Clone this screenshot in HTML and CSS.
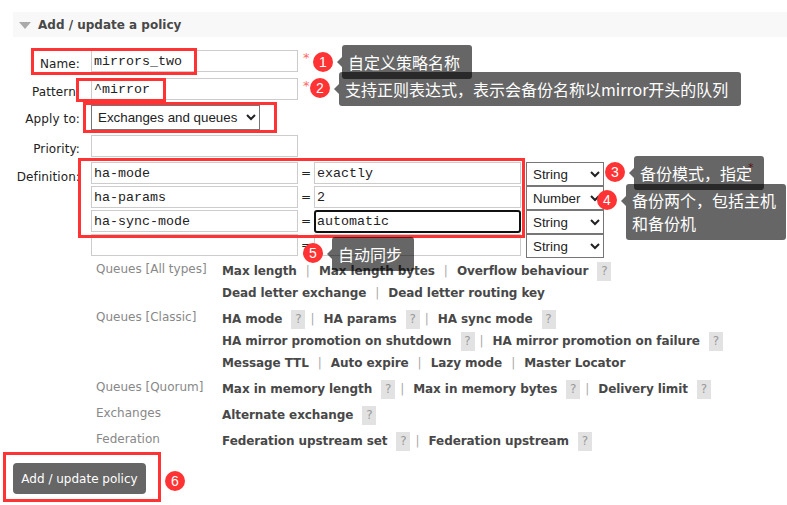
FILE: index.html
```html
<!DOCTYPE html>
<html lang="en">
<head>
    <meta charset="UTF-8">
    <meta name="viewport" content="width=device-width, initial-scale=1.0">
    <title>Add / update a policy</title>
    <link rel="stylesheet" href="styles.css">
</head>
<body>
<div class="page">
    <h2 class="panel-title"><span class="triangle"></span>Add / update a policy</h2>

    <form class="policy-form">
        <div class="form-row row-name">
            <label>Name:</label>
            <input class="text-input" type="text" value="mirrors_two">
            <span class="required">*</span>
        </div>
        <div class="form-row row-pattern">
            <label>Pattern:</label>
            <input class="text-input" type="text" value="^mirror">
            <span class="required">*</span>
        </div>
        <div class="form-row row-apply">
            <label>Apply to:</label>
            <select class="apply-select">
                <option>Exchanges and queues</option>
            </select>
        </div>
        <div class="form-row row-priority">
            <label>Priority:</label>
            <input class="text-input" type="text">
        </div>
        <div class="form-row">
            <label class="label-def">Definition:</label>
            <div class="definition">
                <div class="def-row">
                    <input class="text-input" type="text" value="ha-mode">
                    <span class="equals">=</span>
                    <input class="text-input" type="text" value="exactly">
                    <select class="type-select"><option>String</option></select>
                </div>
                <div class="def-row">
                    <input class="text-input" type="text" value="ha-params">
                    <span class="equals">=</span>
                    <input class="text-input" type="text" value="2">
                    <select class="type-select"><option>Number</option></select>
                </div>
                <div class="def-row">
                    <input class="text-input" type="text" value="ha-sync-mode">
                    <span class="equals">=</span>
                    <input class="text-input focused" type="text" value="automatic">
                    <select class="type-select"><option>String</option></select>
                </div>
                <div class="def-row">
                    <input class="text-input" type="text">
                    <span class="equals">=</span>
                    <input class="text-input" type="text">
                    <select class="type-select"><option>String</option></select>
                </div>
            </div>
        </div>

        <div class="help-group">
            <div class="help-label">Queues [All types]</div>
            <div class="help-links">
                <div class="help-line"><b>Max length</b><i>|</i><b>Max length bytes</b><i>|</i><b>Overflow behaviour</b><span class="q">?</span></div>
                <div class="help-line"><b>Dead letter exchange</b><i>|</i><b>Dead letter routing key</b></div>
            </div>
        </div>
        <div class="help-group">
            <div class="help-label">Queues [Classic]</div>
            <div class="help-links">
                <div class="help-line"><b>HA mode</b><span class="q">?</span><i>|</i><b>HA params</b><span class="q">?</span><i>|</i><b>HA sync mode</b><span class="q">?</span></div>
                <div class="help-line"><b>HA mirror promotion on shutdown</b><span class="q">?</span><i>|</i><b>HA mirror promotion on failure</b><span class="q">?</span></div>
                <div class="help-line"><b>Message TTL</b><i>|</i><b>Auto expire</b><i>|</i><b>Lazy mode</b><i>|</i><b>Master Locator</b></div>
            </div>
        </div>
        <div class="help-group">
            <div class="help-label">Queues [Quorum]</div>
            <div class="help-links">
                <div class="help-line"><b>Max in memory length</b><span class="q">?</span><i>|</i><b>Max in memory bytes</b><span class="q">?</span><i>|</i><b>Delivery limit</b><span class="q">?</span></div>
            </div>
        </div>
        <div class="help-group">
            <div class="help-label">Exchanges</div>
            <div class="help-links">
                <div class="help-line"><b>Alternate exchange</b><span class="q">?</span></div>
            </div>
        </div>
        <div class="help-group">
            <div class="help-label">Federation</div>
            <div class="help-links">
                <div class="help-line"><b>Federation upstream set</b><span class="q">?</span><i>|</i><b>Federation upstream</b><span class="q">?</span></div>
            </div>
        </div>

        <button class="submit-btn" type="button">Add / update policy</button>
    </form>

    <!-- annotations drawn over the form -->
    <div class="box box-name"></div>
    <div class="box box-pattern"></div>
    <div class="box box-apply"></div>
    <div class="box box-def"></div>
    <div class="box box-btn"></div>

    <span class="stray-star">*</span>

    <div class="tip tip-1">自定义策略名称</div>
    <div class="tip tip-2">支持正则表达式，表示会备份名称以mirror开头的队列</div>
    <div class="tip tip-3">备份模式，指定</div>
    <div class="tip tip-4">备份两个，包括主机和备份机</div>
    <div class="tip tip-5">自动同步</div>

    <span class="badge badge-1">1</span>
    <span class="badge badge-2">2</span>
    <span class="badge badge-3">3</span>
    <span class="badge badge-4">4</span>
    <span class="badge badge-5">5</span>
    <span class="badge badge-6">6</span>
</div>
</body>
</html>
```

FILE: styles.css
```css
* {
    box-sizing: border-box;
}
body {
    margin: 0;
    background-color: #fff;
    color: #484848;
    font-family: 'DejaVu Sans', Verdana, sans-serif;
    font-size: 12px;
}
.page {
    position: relative;
    width: 787px;
    height: 505px;
    overflow: hidden;
    padding-top: 12px;
}
.panel-title {
    display: flex;
    align-items: center;
    height: 25px;
    margin: 0 0 0 13px;
    background-color: #f8f8f8;
    color: #484848;
    font-size: 12px;
    font-weight: bold;
}
.triangle {
    width: 0;
    height: 0;
    margin: 1px 7px 0 6px;
    border-left: 6px solid transparent;
    border-right: 6px solid transparent;
    border-top: 7px solid #aaa;
}
.policy-form {
    padding-top: 13px;
}
.form-row {
    display: flex;
    align-items: flex-start;
    margin-bottom: 5px;
}
.row-name {
    margin-bottom: 6px;
}
.form-row label {
    width: 80px;
    height: 22px;
    margin-right: 11px;
    color: #222;
    letter-spacing: 0.1px;
    line-height: 28px;
    text-align: right;
}
.form-row .label-def {
    line-height: 30px;
}
.text-input {
    width: 207px;
    height: 22px;
    padding: 0 2px;
    border: 1px solid #ccc;
    border-radius: 0;
    background: #fff;
    color: #222;
    font-family: 'Liberation Mono', monospace;
    font-size: 13.33px;
}
.text-input.focused {
    height: 23px;
    border: 2px solid #111;
    border-radius: 3px;
    padding: 0 1px;
}
.required {
    margin-left: 5px;
    color: #f66;
    font-size: 13px;
    line-height: 16px;
}
.apply-select {
    width: 169px;
    height: 25px;
    padding-left: 2px;
    font-family: 'Liberation Sans', Arial, sans-serif;
    font-size: 13.33px;
    color: #222;
    background: #fff;
}
.definition {
    display: flex;
    flex-direction: column;
}
.def-row {
    display: flex;
    align-items: flex-start;
    height: 24px;
}
.equals {
    width: 16px;
    color: #222;
    line-height: 22px;
    text-align: center;
}
.type-select {
    width: 78px;
    height: 24px;
    margin-left: 5px;
    padding-left: 2px;
    font-family: 'Liberation Sans', Arial, sans-serif;
    font-size: 13.33px;
    color: #222;
    background: #fff;
}
.help-group {
    display: flex;
    margin-bottom: 4px;
    padding-left: 96px;
}
.form-row + .help-group {
    margin-top: -3px;
}
.help-label {
    width: 126px;
    color: #888;
    line-height: 18px;
}
.help-links {
    display: flex;
    flex-direction: column;
}
.help-line {
    display: flex;
    align-items: center;
    height: 22px;
    white-space: nowrap;
    font-size: 12px;
}
.help-line b {
    color: #484848;
    letter-spacing: -0.08px;
}
.help-line i {
    margin: 0 9px;
    color: #aaa;
    font-style: normal;
    font-weight: normal;
    font-size: 12px;
}
.q {
    width: 14px;
    height: 19px;
    margin-left: 9px;
    background-color: #e2e2e2;
    color: #999;
    font-size: 12px;
    line-height: 19px;
    text-align: center;
}
.q + i {
    margin-left: 5px;
}
.submit-btn {
    display: block;
    width: 133px;
    height: 31px;
    margin: 11px 0 0 13px;
    padding: 0;
    border: none;
    border-radius: 4px;
    background-color: #666;
    color: #fff;
    font-family: 'DejaVu Sans', Verdana, sans-serif;
    font-size: 12px;
}

/* red frames */
.box {
    position: absolute;
    border: 3px solid #f33;
}
.box-name { left: 31px; top: 48px; width: 166px; height: 27px; }
.box-pattern { left: 76px; top: 78px; width: 90px; height: 24px; }
.box-apply { left: 83px; top: 102px; width: 194px; height: 31px; }
.box-def { left: 78px; top: 158px; width: 447px; height: 80px; }
.box-btn { left: 3px; top: 452px; width: 158px; height: 50px; }

.stray-star {
    position: absolute;
    left: 748px;
    top: 161px;
    color: #d33;
    font-size: 11px;
}

/* tooltips */
.tip {
    position: absolute;
    padding: 0 6px;
    border-radius: 3px;
    background-color: rgba(0, 0, 0, 0.6);
    color: #fff;
    font-family: 'Noto Sans CJK SC', 'Liberation Sans', sans-serif;
    font-size: 16px;
    line-height: 34px;
}
.tip::before {
    content: '';
    position: absolute;
    left: -5px;
    top: 12px;
    border-top: 5px solid transparent;
    border-bottom: 5px solid transparent;
    border-right: 5px solid rgba(0, 0, 0, 0.6);
}
.tip-1 { left: 342px; top: 45px; width: 130px; height: 34px; }
.tip-2 { left: 339px; top: 72px; width: 402px; height: 34px; }
.tip-3 { left: 634px; top: 156px; width: 130px; height: 34px; }
.tip-4 { left: 626px; top: 184px; width: 160px; height: 56px; line-height: 23px; padding-top: 5px; }
.tip-5 { left: 332px; top: 237px; width: 82px; height: 34px; }

/* numbered badges */
.badge {
    position: absolute;
    width: 20px;
    height: 20px;
    border-radius: 50%;
    background-color: #f33;
    color: #fff;
    font-family: 'Liberation Sans', Arial, sans-serif;
    font-size: 14px;
    line-height: 20px;
    text-align: center;
}
.badge-1 { left: 313px; top: 52px; }
.badge-2 { left: 310px; top: 78px; }
.badge-3 { left: 605px; top: 162px; }
.badge-4 { left: 597px; top: 190px; }
.badge-5 { left: 303px; top: 243px; }
.badge-6 { left: 165px; top: 471px; }
```
